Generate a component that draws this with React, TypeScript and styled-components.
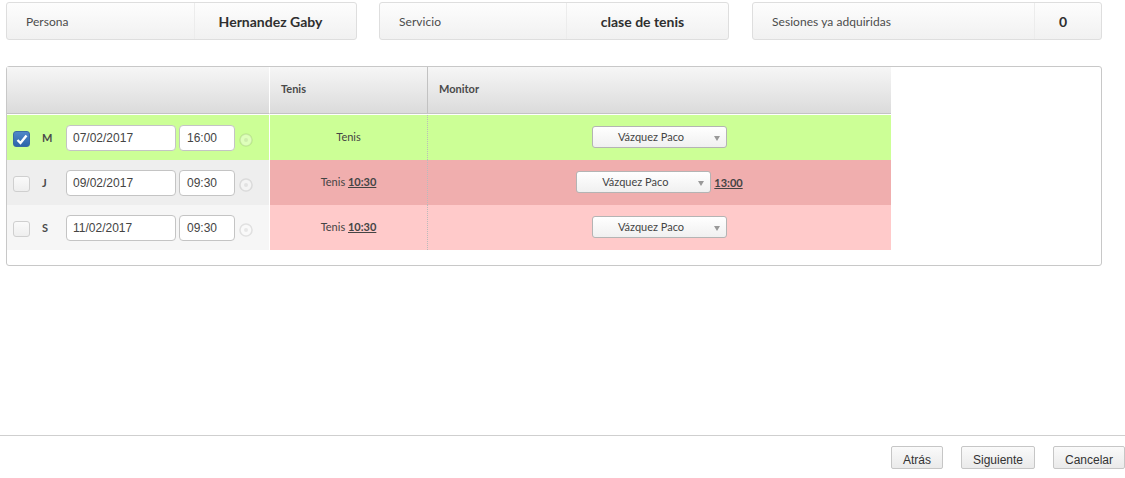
import React from "react";
import styled, { createGlobalStyle } from "styled-components";

const Global = createGlobalStyle`
  html, body { margin: 0; padding: 0; background: #fff; }
  body { font-family: "Lato", "Noto Sans", "Liberation Sans", sans-serif; color: #444; }
  #root { width: 1125px; height: 478px; overflow: hidden; }
`;

const Page = styled.div`
  height: 478px;
  display: flex;
  flex-direction: column;
  padding-top: 2px;
  box-sizing: border-box;
`;

const Summary = styled.div`
  display: flex;
  padding: 0 23px 0 6px;
`;

const Card = styled.div<{ $w: number; $gap?: number }>`
  width: ${(p) => p.$w}px;
  margin-left: ${(p) => p.$gap ?? 0}px;
  height: 38px;
  box-sizing: border-box;
  display: flex;
  align-items: center;
  border: 1px solid #dedede;
  border-radius: 3px;
  background: linear-gradient(#fdfdfd, #f1f1f1);
`;

const CardLabel = styled.div<{ $w: number }>`
  width: ${(p) => p.$w}px;
  height: 36px;
  line-height: 37px;
  box-sizing: border-box;
  padding-left: 19px;
  font-size: 12px;
  letter-spacing: 0.05px;
  color: #4c4c4c;
  border-right: 1px solid #ececec;
`;

const CardValue = styled.div`
  flex: 1;
  text-align: center;
  padding-right: 10px;
  font-size: 14px;
  font-weight: 700;
  color: #2f2f2f;
`;

const Panel = styled.div`
  margin: 26px 23px 0 6px;
  height: 200px;
  box-sizing: border-box;
  border: 1px solid #c8c8c8;
  border-radius: 3px;
`;

const Grid = styled.div`
  width: 884px;
  display: grid;
  grid-template-columns: 263px 158px 463px;
`;

const Head = styled.div<{ $first?: boolean; $last?: boolean }>`
  height: 47px;
  box-sizing: border-box;
  padding-left: 11px;
  line-height: 44px;
  font-size: 11px;
  font-weight: 700;
  color: #4a4a4a;
  background: linear-gradient(#f6f6f6, #dbdbdb);
  border-bottom: 1px solid #c4c4c4;
  border-right: ${(p) => (p.$last ? "0" : `1px solid ${p.$first ? "#fff" : "#c2c2c2"}`)};
`;

const HeadGap = styled.div`
  height: 1px;
  background: #fff;
`;

const Left = styled.div<{ $bg: string }>`
  height: 45px;
  display: flex;
  align-items: center;
  background: ${(p) => p.$bg};
  border-right: 1px solid #fff;
  box-sizing: border-box;
  padding-left: 6px;
`;

const Check = styled.span<{ $on?: boolean }>`
  width: 17px;
  height: 16px;
  box-sizing: border-box;
  margin-top: 3px;
  border-radius: 3px;
  display: flex;
  align-items: center;
  justify-content: center;
  border: 1px solid ${(p) => (p.$on ? "#3a6aa5" : "#cfcfcf")};
  background: ${(p) => (p.$on ? "linear-gradient(#5088c8, #2d65aa)" : "linear-gradient(#fafafa, #eeeeee)")};
`;

const Day = styled.span`
  width: 12px;
  margin-left: 12px;
  font-size: 11px;
  font-weight: 700;
  color: #4a4a4a;
`;

const Dates = styled.div`
  display: flex;
  align-items: center;
  margin-left: 12px;
`;

const Field = styled.span<{ $w: number; $pad: number }>`
  width: ${(p) => p.$w}px;
  height: 26px;
  line-height: 24px;
  box-sizing: border-box;
  margin-right: 3px;
  padding-left: ${(p) => p.$pad}px;
  font-family: "Liberation Sans", Arial, sans-serif;
  font-size: 12px;
  color: #444;
  background: #fff;
  border: 1px solid #c4c4c4;
  border-radius: 4px;
`;

const Mid = styled.div<{ $bg: string }>`
  height: 45px;
  line-height: 44px;
  text-align: center;
  font-size: 11px;
  color: #444;
  background: ${(p) => p.$bg};
  border-right: 1px dotted #bbb;
  box-sizing: border-box;
`;

const TimeLink = styled.span`
  font-weight: 700;
  text-decoration: underline;
  color: #444;
`;

const Right = styled.div<{ $bg: string }>`
  height: 45px;
  display: flex;
  align-items: center;
  justify-content: center;
  gap: 3px;
  background: ${(p) => p.$bg};
  font-size: 11px;
`;

const Select = styled.div`
  width: 135px;
  height: 22px;
  margin-top: -1px;
  box-sizing: border-box;
  position: relative;
  text-align: center;
  padding-right: 17px;
  line-height: 20px;
  font-size: 11px;
  color: #444;
  background: linear-gradient(#ffffff, #f0f0f0);
  border: 1px solid #b4b4b4;
  border-radius: 3px;
`;

const Caret = styled.span`
  position: absolute;
  right: 6px;
  top: 9px;
  width: 0;
  height: 0;
  border-left: 3px solid transparent;
  border-right: 3px solid transparent;
  border-top: 5px solid #999;
`;

const Foot = styled.div`
  margin-top: auto;
  height: 43px;
  box-sizing: border-box;
  border-top: 1px solid #cfcfcf;
  display: flex;
  justify-content: flex-end;
  gap: 18px;
  padding-top: 10px;
`;

const Btn = styled.div<{ $w: number }>`
  width: ${(p) => p.$w}px;
  height: 23px;
  box-sizing: border-box;
  line-height: 27px;
  text-align: center;
  font-family: "Liberation Sans", Arial, sans-serif;
  font-size: 12px;
  color: #333;
  background: linear-gradient(#fafafa, #eaeaea);
  border: 1px solid #c6c6c6;
  border-radius: 2px;
`;

const Ring = styled.svg`
  margin: 4px 0 0 1px;
`;

const Circle = () => (
  <Ring width="14" height="14" viewBox="0 0 14 14">
    <circle cx="7" cy="7" r="6" fill="rgba(255,255,255,0.35)" stroke="rgba(0,0,0,0.09)" strokeWidth="1.6" />
    <circle cx="7" cy="7" r="2" fill="rgba(0,0,0,0.07)" />
  </Ring>
);

const Tick = () => (
  <svg width="12" height="11" viewBox="0 0 12 11">
    <path d="M1.5 6 L4.5 9 L10.5 1.5" fill="none" stroke="#fff" strokeWidth="2.4" />
  </svg>
);

const rows = [
  { on: true, day: "M", date: "07/02/2017", time: "16:00", left: "#ccff96", bg: "#ccff96", late: "", after: "" },
  { on: false, day: "J", date: "09/02/2017", time: "09:30", left: "#eeeeee", bg: "#f0aeae", late: "10:30", after: "13:00" },
  { on: false, day: "S", date: "11/02/2017", time: "09:30", left: "#f6f6f6", bg: "#ffcaca", late: "10:30", after: "" },
];

export default function App() {
  return (
    <Page>
      <Global />
      <Summary>
        <Card $w={351}>
          <CardLabel $w={188}>Persona</CardLabel>
          <CardValue>Hernandez Gaby</CardValue>
        </Card>
        <Card $w={350} $gap={22}>
          <CardLabel $w={187}>Servicio</CardLabel>
          <CardValue>clase de tenis</CardValue>
        </Card>
        <Card $w={350} $gap={23}>
          <CardLabel $w={282}>Sesiones ya adquiridas</CardLabel>
          <CardValue>0</CardValue>
        </Card>
      </Summary>
      <Panel>
        <Grid>
          <Head $first />
          <Head>Tenis</Head>
          <Head $last>Monitor</Head>
          <HeadGap />
          <HeadGap />
          <HeadGap />
          {rows.map((r) => (
            <React.Fragment key={r.day}>
              <Left $bg={r.left}>
                <Check $on={r.on}>{r.on && <Tick />}</Check>
                <Day>{r.day}</Day>
                <Dates>
                  <Field $w={110} $pad={6}>{r.date}</Field>
                  <Field $w={56} $pad={7}>{r.time}</Field>
                  <Circle />
                </Dates>
              </Left>
              <Mid $bg={r.bg}>
                Tenis{r.late && " "}
                {r.late && <TimeLink>{r.late}</TimeLink>}
              </Mid>
              <Right $bg={r.bg}>
                <Select>
                  Vázquez Paco
                  <Caret />
                </Select>
                {r.after && <TimeLink>{r.after}</TimeLink>}
              </Right>
            </React.Fragment>
          ))}
        </Grid>
      </Panel>
      <Foot>
        <Btn $w={52}>Atrás</Btn>
        <Btn $w={74}>Siguiente</Btn>
        <Btn $w={72}>Cancelar</Btn>
      </Foot>
    </Page>
  );
}
